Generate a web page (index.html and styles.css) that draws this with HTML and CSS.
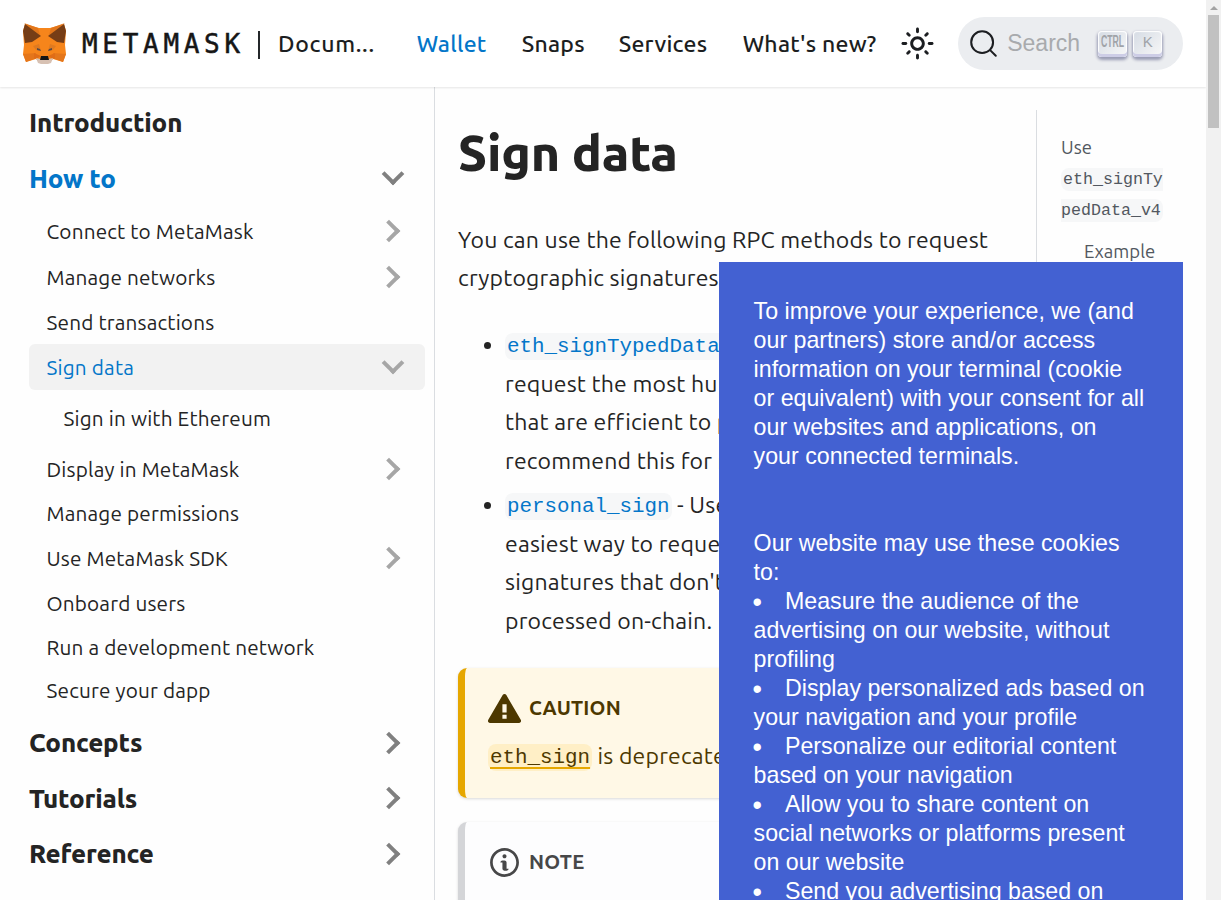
FILE: index.html
```html
<!DOCTYPE html>
<html lang="en">
<head>
<meta charset="utf-8">
<title>Sign data | MetaMask</title>
<link rel="stylesheet" href="styles.css">
</head>
<body>
<div class="page">
  <header class="navbar">
    <a class="brand">
      <svg class="fox" viewBox="0 0 45 41" width="45" height="41">
        <polygon fill="#f6851b" points="3,1 17,5 28,5 42,1 44,8 43,22 44,31 41,39 31,36 28,39 17,39 14,36 4,39 1,31 2,22 1,8"/>
        <polygon fill="#e2761b" points="2,0 18,12 16,5"/>
        <polygon fill="#e2761b" points="43,0 27,12 29,5"/>
        <polygon fill="#763d16" points="3,1 1,8 3,20 10,19 19,13"/>
        <polygon fill="#763d16" points="42,1 44,8 42,20 35,19 26,13"/>
        <polygon fill="#e4761b" points="1,31 14,30 12,36 4,39"/>
        <polygon fill="#e4761b" points="44,31 31,30 33,36 41,39"/>
        <polygon fill="#e07a20" points="11,23 17,21 19,28 14,27"/>
        <polygon fill="#e07a20" points="34,23 28,21 26,28 31,27"/>
        <polygon fill="#e06d17" points="12,30 19,33 16,35 12,36"/>
        <polygon fill="#e06d17" points="33,30 26,33 29,35 33,36"/>
        <polygon fill="#5c4a44" points="15,25 18,26 19,28 15,27"/>
        <polygon fill="#5c4a44" points="30,25 27,26 26,28 30,27"/>
        <polygon fill="#d7c1b3" points="14,35 18,36 27,36 31,35 29,40 26,41 19,41 16,40"/>
        <polygon fill="#161616" points="19,33 26,33 27,37 18,37"/>
      </svg>
      <span class="wordmark">METAMASK</span>
      <span class="bar"></span>
      <b class="docs">Docum...</b>
    </a>
    <nav class="links">
      <a class="wallet on">Wallet</a><a class="snaps">Snaps</a><a class="services">Services</a><a class="new">What's new?</a>
    </nav>
    <svg class="sun" viewBox="0 0 24 24" width="35" height="35"><path fill="currentColor" d="M12,9c1.65,0,3,1.35,3,3s-1.35,3-3,3s-3-1.35-3-3S10.35,9,12,9 M12,7c-2.76,0-5,2.24-5,5s2.24,5,5,5s5-2.24,5-5 S14.76,7,12,7L12,7z M2,13l2,0c0.55,0,1-0.45,1-1s-0.45-1-1-1l-2,0c-0.55,0-1,0.45-1,1S1.45,13,2,13z M20,13l2,0c0.55,0,1-0.45,1-1 s-0.45-1-1-1l-2,0c-0.55,0-1,0.45-1,1S19.45,13,20,13z M11,2v2c0,0.55,0.45,1,1,1s1-0.45,1-1V2c0-0.55-0.45-1-1-1S11,1.45,11,2z M11,20v2c0,0.55,0.45,1,1,1s1-0.45,1-1v-2c0-0.55-0.45-1-1-1C11.45,19,11,19.45,11,20z M5.99,4.58c-0.39-0.39-1.03-0.39-1.41,0 c-0.39,0.39-0.39,1.03,0,1.41l1.06,1.06c0.39,0.39,1.03,0.39,1.41,0s0.39-1.03,0-1.41L5.99,4.58z M18.36,16.95 c-0.39-0.39-1.03-0.39-1.41,0c-0.39,0.39-0.39,1.03,0,1.41l1.06,1.06c0.39,0.39,1.03,0.39,1.41,0c0.39-0.39,0.39-1.03,0-1.41 L18.36,16.95z M19.42,5.99c0.39-0.39,0.39-1.03,0-1.41c-0.39-0.39-1.03-0.39-1.41,0l-1.06,1.06c-0.39,0.39-0.39,1.03,0,1.41 s1.03,0.39,1.41,0L19.42,5.99z M7.05,18.36c0.39-0.39,0.39-1.03,0-1.41c-0.39-0.39-1.03-0.39-1.41,0l-1.06,1.06 c-0.39,0.39-0.39,1.03,0,1.41s1.03,0.39,1.41,0L7.05,18.36z"/></svg>
    <div class="search">
      <svg viewBox="0 0 20 20" width="29" height="29"><path d="M14.386 14.386l4.0877 4.0877-4.0877-4.0877c-2.9418 2.9419-7.7115 2.9419-10.6533 0-2.9419-2.9418-2.9419-7.7115 0-10.6533 2.9418-2.9419 7.7115-2.9419 10.6533 0 2.9419 2.9418 2.9419 7.7115 0 10.6533z" stroke="#1c1e21" stroke-width="1.4" fill="none" stroke-linecap="round" stroke-linejoin="round"/></svg>
      <span class="placeholder">Search</span>
      <kbd><span class="ctrl">CTRL</span></kbd><kbd>K</kbd>
    </div>
  </header>
  <div class="body">
    <aside class="sidebar">
      <a class="item top">Introduction</a>
      <a class="item top on">How to<i class="chev down"></i></a>
      <div class="sub">
        <a class="item h46">Connect to MetaMask<i class="chev"></i></a>
        <a class="item h46">Manage networks<i class="chev"></i></a>
        <a class="item h44">Send transactions</a>
        <a class="item h46 selected">Sign data<i class="chev down"></i></a>
        <a class="item h56 deep">Sign in with Ethereum</a>
        <a class="item h46">Display in MetaMask<i class="chev"></i></a>
        <a class="item h42">Manage permissions</a>
        <a class="item h48">Use MetaMask SDK<i class="chev"></i></a>
        <a class="item h42">Onboard users</a>
        <a class="item h46">Run a development network</a>
        <a class="item h40">Secure your dapp</a>
      </div>
      <a class="item top">Concepts<i class="chev"></i></a>
      <a class="item top">Tutorials<i class="chev"></i></a>
      <a class="item top">Reference<i class="chev"></i></a>
    </aside>
    <main class="article">
      <h1>Sign data</h1>
      <p class="lead">You can use the following RPC methods to request<br>cryptographic signatures from users:</p>
      <ul class="methods">
        <li><code>eth_signTypedData_v4</code> - Use this to<br>request the most human-readable<br>that are efficient to process<br>recommend this for most</li>
        <li><code>personal_sign</code> - Use this for the<br>easiest way to request<br>signatures that don't need<br>processed on-chain.</li>
      </ul>
      <section class="note caution">
        <h5><svg viewBox="0 0 16 16" width="33" height="33"><path fill="currentColor" fill-rule="evenodd" d="M8.893 1.5c-.183-.31-.52-.5-.887-.5s-.703.19-.886.5L.138 13.499a.98.98 0 0 0 0 1.001c.193.31.53.501.886.501h13.964c.367 0 .704-.19.877-.5a1.03 1.03 0 0 0 .01-1.002L8.893 1.5zm.133 11.497H6.987v-2.003h2.039v2.003zm0-3.004H6.987V5.987h2.039v4.006z"/></svg>CAUTION</h5>
        <p><code>eth_sign</code> is deprecated.</p>
      </section>
      <section class="note plain">
        <h5><svg viewBox="0 0 14 16" width="29" height="33"><path fill="currentColor" fill-rule="evenodd" d="M6.3 5.69a.942.942 0 0 1-.28-.7c0-.28.09-.52.28-.7.19-.18.42-.28.7-.28.28 0 .52.09.7.28.18.19.28.42.28.7 0 .28-.09.52-.28.7a1 1 0 0 1-.7.3c-.28 0-.52-.11-.7-.3zM8 7.99c-.02-.25-.11-.48-.31-.69-.2-.19-.42-.3-.69-.31H6c-.27.02-.48.13-.69.31-.2.2-.3.44-.31.69h1v3c.02.27.11.5.31.69.2.2.42.31.69.31h1c.27 0 .48-.11.69-.31.2-.19.3-.42.31-.69H8V7.98v.01zM7 2.3c-3.14 0-5.7 2.54-5.7 5.68 0 3.14 2.56 5.7 5.7 5.7s5.7-2.55 5.7-5.7c0-3.15-2.56-5.69-5.7-5.69v.01zM7 .98c3.86 0 7 3.14 7 7s-3.14 7-7 7-7-3.12-7-7 3.14-7 7-7z"/></svg>NOTE</h5>
      </section>
    </main>
    <aside class="toc">
      <a>Use<br><code>eth_signTypedData_v4</code></a>
      <a class="child">Example</a>
    </aside>
  </div>
</div>
<div class="scrollbar"><span class="arrow"></span><span class="thumb"></span></div>
<div class="cookies">
  <p>To improve your experience, we (and<br>our partners) store and/or access<br>information on your terminal (cookie<br>or equivalent) with your consent for all<br>our websites and applications, on<br>your connected terminals.</p>
  <p>Our website may use these cookies<br>to:<br><i>•</i>Measure the audience of the<br>advertising on our website, without<br>profiling<br><i>•</i>Display personalized ads based on<br>your navigation and your profile<br><i>•</i>Personalize our editorial content<br>based on your navigation<br><i>•</i>Allow you to share content on<br>social networks or platforms present<br>on our website<br><i>•</i>Send you advertising based on</p>
</div>
</body>
</html>
```
FILE: styles.css
```css
* { box-sizing: border-box; }
body {
  margin: 0; width: 1221px; height: 900px; overflow: hidden; display: flex;
  background: #fefefe; color: #242424;
  font-family: Ubuntu, "Noto Sans", "Open Sans", sans-serif; font-size: 23.04px; font-weight: 440; white-space: nowrap;
}
.page { width: 1206px; height: 900px; display: flex; flex-direction: column; overflow: hidden; }
.navbar {
  height: 87px; flex: none; display: flex; align-items: center; padding: 0 23px 0 22px;
  background: #fff; box-shadow: 0 1px 2px rgba(0,0,0,.1); color: #1c1e21; z-index: 1;
}
.brand { display: flex; align-items: center; width: 395px; }
.fox { display: block; flex: none; }
.wordmark { margin-left: 15px; width: 176px; font: 26px/30px "DejaVu Sans Mono", monospace; letter-spacing: 4.7px; color: #161616; -webkit-text-stroke: .5px #161616; }
.bar { width: 2px; height: 28px; background: #24272a; margin-right: 18px; margin-top: 3px; }
.docs, .links { font-weight: 560; line-height: 32px; letter-spacing: .25px; }
.docs { letter-spacing: .7px; }
.links { display: flex; width: 484px; }
.wallet { width: 105px; } .snaps { width: 97px; } .services { width: 124px; }
.on { color: #0376c9; }
.sun { flex: none; margin-right: 23px; }
.search {
  width: 225px; height: 53px; border-radius: 27px; background: #ebedf0; display: flex; align-items: center;
  padding-left: 11px; font-family: "Liberation Sans", Arial, sans-serif; font-weight: 400; color: #a8aaad;
}
.placeholder { margin-left: 9px; width: 91px; font-size: 23px; }
kbd {
  width: 29px; height: 26px; margin-right: 6px; border-radius: 4px; text-align: center;
  font: 15px/22px "Liberation Sans", Arial, sans-serif; color: #a0a3a8;
  background: linear-gradient(-225deg, #d5dbe4, #f8f8f8);
  box-shadow: inset 0 -3px 0 0 #cdcde6, inset 0 0 1px 1px #fff, 0 2px 3px 1px rgba(30,35,90,.4);
}
.ctrl { display: block; margin: 0 -10px; transform: translateY(-1px) scale(.58, 1.05); font-weight: bold; font-size: 15px; line-height: 23px; }
.body { flex: 1; display: flex; min-height: 0; }
.sidebar { width: 435px; flex: none; border-right: 1px solid #dadde1; padding: 8px 9px 0 29px; overflow: hidden; }
.item { display: flex; align-items: center; justify-content: space-between; font-size: 20.74px; letter-spacing: .17px; padding: 0 18px 0 17.5px; border-radius: 6px; }
.top { height: 55.5px; padding-left: 0; font-size: 25.9px; font-weight: 780; letter-spacing: -.15px; }
.sub { padding: 2.4px 0 4.6px; }
.h40 { height: 40px; } .h42 { height: 42px; } .h44 { height: 44px; } .h46 { height: 46px; } .h48 { height: 48px; } .h56 { height: 56px; }
.deep { padding-left: 34.5px; }
.selected { background: #f2f2f2; color: #0376c9; }
.chev { width: 29px; height: 29px; display: grid; place-items: center; }
.chev::before { content: ""; box-sizing: border-box; width: 16px; height: 16px; border: solid #a6a6a6; border-width: 4px 4px 0 0; transform: translateX(-4px) rotate(45deg); }
.top .chev::before { border-color: #808080; }
.chev.down::before { transform: translateY(-4px) rotate(135deg); }
.article { width: 601px; flex: none; padding: 33px 24px 0 23px; line-height: 38.5px; letter-spacing: .18px; }
h1 { margin: 0 0 37px; font-size: 50px; line-height: 64px; font-weight: 780; letter-spacing: -.2px; }
.lead { margin: 0 0 29px; line-height: 38px; }
.methods { margin: 0 0 28px; padding-left: 47px; }
.methods li + li { margin-top: 6px; }
code { font-family: "Liberation Mono", monospace; font-weight: 400; font-size: 20.85px; line-height: 1; letter-spacing: 0; vertical-align: 1px; background: #f6f7f8; border-radius: 8px; padding: 2px; }
.methods code { color: #0376c9; }
.note { border-left: 7px solid #d4d5d8; border-radius: 9px; padding: 23px; background: #fdfdfe; box-shadow: 0 1px 3px rgba(0,0,0,.15); height: 130px; margin-bottom: 24px; color: #474748; }
.caution { border-color: #e6a700; background: #fff8e6; color: #4d3800; }
h5 { margin: 0 0 12px; font-size: 20.2px; line-height: 34px; font-weight: 750; display: flex; align-items: center; gap: 8px; }
.plain h5 { padding-left: 2px; gap: 10px; }
.note p { margin: 0; }
.note code { background: #ffefc6; text-decoration: underline 2px #e6a700; text-underline-offset: 4px; }
.toc { width: 127px; margin: 23px 0 0 0; border-left: 1px solid #dadde1; padding: 22px 0 0 24px; color: #525860; font-size: 18.5px; line-height: 31px; }
.toc a { display: block; width: 103px; white-space: normal; word-break: break-all; }
.toc code { font-size: 16.65px; }
.toc .child { padding-left: 23px; margin-top: 11px; width: 110px; }
.scrollbar { width: 15px; background: #f1f1f1; display: flex; flex-direction: column; align-items: center; }
.arrow { margin: 6px 0 5px; border: 4px solid transparent; border-top: 0; border-bottom-color: #a3a3a3; }
.thumb { width: 11px; height: 113px; background: #c1c1c1; }
.cookies {
  position: fixed; left: 719px; top: 262px; width: 464px; height: 638px; overflow: hidden; z-index: 2;
  background: #4361d2; color: #fff; padding: 35px 34.6px; font: 23.2px/29px "Liberation Sans", Arial, sans-serif;
}
.cookies p { margin: 0 0 58px; }
.cookies i { display: inline-block; width: 31.4px; font-style: normal; font-size: 27px; line-height: 20px; vertical-align: -2px; text-indent: -1px; }
```
